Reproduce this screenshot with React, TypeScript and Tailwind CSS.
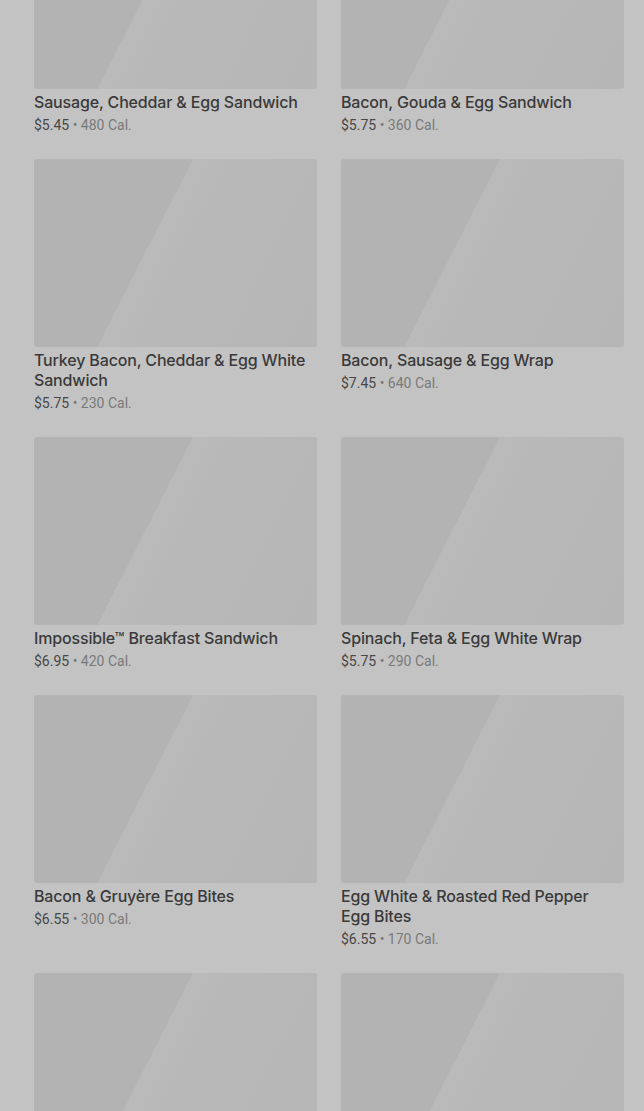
import React from 'react';

interface MenuItem {
  name: string;
  price: string;
  calories: number;
}

const items: MenuItem[] = [
  { name: 'Sausage, Cheddar & Egg Sandwich', price: '$5.45', calories: 480 },
  { name: 'Bacon, Gouda & Egg Sandwich', price: '$5.75', calories: 360 },
  { name: 'Turkey Bacon, Cheddar & Egg White Sandwich', price: '$5.75', calories: 230 },
  { name: 'Bacon, Sausage & Egg Wrap', price: '$7.45', calories: 640 },
  { name: 'Impossible™ Breakfast Sandwich', price: '$6.95', calories: 420 },
  { name: 'Spinach, Feta & Egg White Wrap', price: '$5.75', calories: 290 },
  { name: 'Bacon & Gruyère Egg Bites', price: '$6.55', calories: 300 },
  { name: 'Egg White & Roasted Red Pepper Egg Bites', price: '$6.55', calories: 170 },
];

// image placeholder, still loading
const Placeholder = () => (
  <div className="h-[188px] w-full rounded-[3px] bg-[linear-gradient(117deg,#b3b3b3_42%,#bababa_42%,#b8b8b8_55%,#b6b6b6_100%)]" />
);

const ProductCard: React.FC<{ item: MenuItem }> = ({ item }) => (
  <div className="flex flex-col">
    <Placeholder />
    <h3 className="mt-[3px] pr-2 font-['Inter',sans-serif] text-[16px] leading-[20px] font-medium tracking-[-0.01em] text-[#3a3a3a]">
      {item.name}
    </h3>
    <p className="mt-[3px] text-[14px] leading-[20px]">
      <span className="text-[#474747]">{item.price}</span>
      <span className="text-[#7a7a7a]"> • {item.calories} Cal.</span>
    </p>
  </div>
);

export default function App() {
  return (
    <div className="h-[1111px] overflow-hidden bg-[#c3c3c3] font-['Roboto','Liberation_Sans',sans-serif]">
      <div className="mt-[-99px] grid grid-cols-2 gap-6 pl-[34px] pr-[20px]">
        {items.map((item) => (
          <ProductCard key={item.name} item={item} />
        ))}
        {/* next row, text is below the fold */}
        <Placeholder />
        <Placeholder />
      </div>
    </div>
  );
}
